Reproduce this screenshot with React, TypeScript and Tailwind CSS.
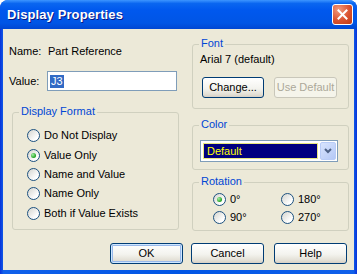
import type { ReactNode } from "react"

function Radio({ checked }: { checked?: boolean }) {
  return (
    <span className="flex h-[13px] w-[13px] shrink-0 items-center justify-center rounded-full border border-[#1C5180] bg-[linear-gradient(135deg,#D4D4CE,#FFFFFF_75%)]">
      {checked && <span className="h-[5px] w-[5px] rounded-full bg-[radial-gradient(circle_at_35%_35%,#A6F0A6,#21A121_70%)]" />}
    </span>
  )
}

function RadioRow({ label, checked, className }: { label: string; checked?: boolean; className?: string }) {
  return (
    <div className={"flex h-[13px] items-center " + (className ?? "")}>
      <Radio checked={checked} />
      <span className="ml-[4px] leading-[13px]">{label}</span>
    </div>
  )
}

function GroupBox({ title, className, children }: { title: string; className?: string; children: ReactNode }) {
  return (
    <div className={"relative rounded-[3px] border border-[#D0D0BF] " + (className ?? "")}>
      <span className="absolute -top-[8px] left-[6px] bg-[#ECE9D8] px-[2px] leading-[13px] text-[#0046D5]">{title}</span>
      {children}
    </div>
  )
}

function XpButton({ children, className, isDefault, disabled }: { children: ReactNode; className?: string; isDefault?: boolean; disabled?: boolean }) {
  const base = "flex h-[21px] items-center justify-center rounded-[3px] border leading-[13px] "
  const look = disabled
    ? "border-[#C9C7BA] bg-[#F5F4EA] text-[#ACA899]"
    : "border-[#003C74] bg-[linear-gradient(#FFFFFF,#F3F3EE_55%,#E3E0D6_85%,#D6D0C5)] text-black"
  const ring = isDefault ? " shadow-[inset_0_0_0_1px_#CEE7FF,inset_0_0_0_2px_#98B8EA]" : ""
  return <div className={base + look + ring + " " + (className ?? "")}>{children}</div>
}

export default function App() {
  return (
    <div className="flex h-[274px] w-[357px] flex-col overflow-hidden rounded-t-[8px] bg-[linear-gradient(90deg,#0831D9,#1060EA_1%,#0055E5_50%,#1060EA_99%,#0831D9)] font-['Liberation_Sans',Arial,sans-serif] text-[11px] text-black">
      {/* Title bar */}
      <div className="flex h-[29px] shrink-0 items-center justify-between bg-[linear-gradient(#3D95FF,#0A66F0_12%,#0058EE_35%,#0055E5_80%,#0046D2)] pl-[7px] pr-[4px]">
        <span className="pt-[1px] text-[13px] font-bold tracking-[0.1px] text-white [text-shadow:1px_1px_#0A1883]">Display Properties</span>
        <div className="flex h-[21px] w-[21px] items-center justify-center rounded-[3px] border border-white bg-[radial-gradient(circle_at_30%_25%,#F29A7D,#DA5230_55%,#C13A12)]">
          <svg width="11" height="11" viewBox="0 0 11 11">
            <path d="M1.5 1.5 L9.5 9.5 M9.5 1.5 L1.5 9.5" stroke="#FFFFFF" strokeWidth="2" strokeLinecap="square" />
          </svg>
        </div>
      </div>

      {/* Body */}
      <div className="mx-[3px] mb-[4px] flex flex-1 flex-col bg-[#ECE9D8]">
        <div className="flex">
          {/* Left column */}
          <div className="ml-[6px] flex w-[170px] flex-col pt-[16px]">
            <div className="flex h-[13px] items-center leading-[13px]">
              <span className="w-[39px]">Name:</span>
              <span>Part Reference</span>
            </div>
            <div className="mt-[13px] flex h-[20px] items-center">
              <span className="w-[38px] leading-[13px]">Value:</span>
              <div className="flex h-[20px] w-[130px] items-center border border-[#7F9DB9] bg-white pl-[2px]">
                <span className="bg-[#316AC5] px-[1px] leading-[13px] text-white">J3</span>
              </div>
            </div>
            <GroupBox title="Display Format" className="ml-[3px] mt-[21px] h-[118px] w-[167px] pl-[14px] pt-[16px]">
              <RadioRow label="Do Not Display" />
              <RadioRow label="Value Only" checked className="mt-[7px]" />
              <RadioRow label="Name and Value" className="mt-[6px]" />
              <RadioRow label="Name Only" className="mt-[6px]" />
              <RadioRow label="Both if Value Exists" className="mt-[7px]" />
            </GroupBox>
          </div>

          {/* Right column */}
          <div className="ml-[13px] flex w-[157px] flex-col pt-[15px]">
            <GroupBox title="Font" className="h-[65px] pl-[7px] pt-[8px]">
              <div className="leading-[13px]">Arial 7 (default)</div>
              <div className="mt-[11px] flex">
                <XpButton className="ml-[2px] w-[62px]">Change...</XpButton>
                <XpButton className="ml-[10px] w-[63px]" disabled>Use Default</XpButton>
              </div>
            </GroupBox>

            <GroupBox title="Color" className="mt-[16px] h-[45px] pl-[7px] pt-[14px]">
              <div className="flex h-[22px] w-[138px] items-center border border-[#7F9DB9] bg-white p-[1px]">
                <div className="ml-[1px] flex h-[16px] flex-1 items-center border border-[#E8E880] bg-[#000080] pl-[3px] leading-[13px] text-[#FFFF00]">
                  Default
                </div>
                <div className="ml-[2px] flex h-[18px] w-[16px] items-center justify-center rounded-[2px] border border-[#B9CCF7] bg-[linear-gradient(135deg,#D8E4FD,#B4C8F6)]">
                  <svg width="8" height="6" viewBox="0 0 8 6">
                    <path d="M1 1 L4 4 L7 1" stroke="#4D6185" strokeWidth="2" fill="none" />
                  </svg>
                </div>
              </div>
            </GroupBox>

            <GroupBox title="Rotation" className="mt-[12px] h-[49px] pl-[20px] pt-[10px]">
              <div className="grid grid-cols-[68px_auto] gap-y-[5px]">
                <RadioRow label="0°" checked />
                <RadioRow label="180°" />
                <RadioRow label="90°" />
                <RadioRow label="270°" />
              </div>
            </GroupBox>
          </div>
        </div>

        {/* Buttons */}
        <div className="mt-[12px] flex justify-end pr-[7px]">
          <XpButton className="w-[73px]" isDefault>OK</XpButton>
          <XpButton className="ml-[8px] w-[73px]">Cancel</XpButton>
          <XpButton className="ml-[10px] w-[73px]">Help</XpButton>
        </div>
      </div>
    </div>
  )
}
